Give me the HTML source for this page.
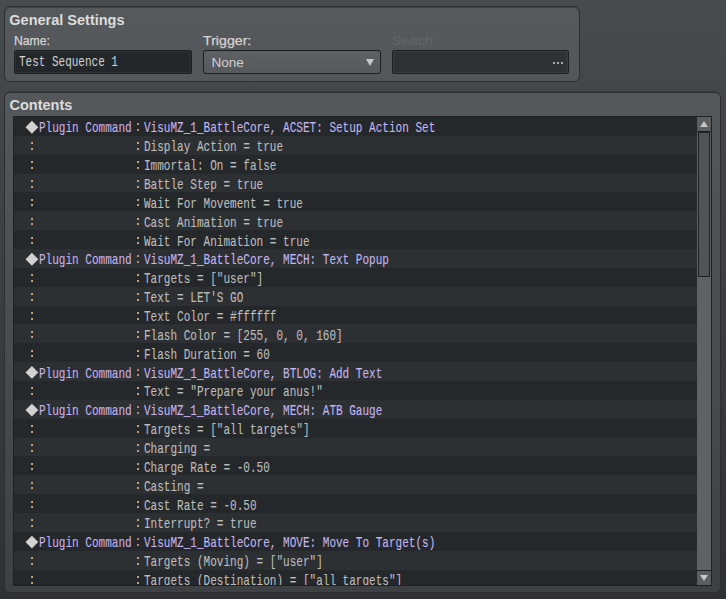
<!DOCTYPE html>
<html><head><meta charset="utf-8"><style>
*{margin:0;padding:0;box-sizing:border-box}
html,body{width:726px;height:599px;overflow:hidden}
body{background:linear-gradient(#484b4e,#2e3134);font-family:"Liberation Sans",sans-serif;position:relative}
.panel{position:absolute;border:1px solid #2c2e30;border-radius:6px}
.gs{left:4px;top:6px;width:576px;height:76px;background:linear-gradient(#56595c 0px,#54575a 76px);box-shadow:inset 0 1px 0 #3e4043}
.ct{left:4px;top:92px;width:717px;height:501px;background:linear-gradient(#55585b,#3e4144);box-shadow:0 -1px 0 #3a3c3e}
.h1{position:absolute;font-weight:bold;font-size:14.5px;color:#dcdcdc;white-space:nowrap;line-height:17px}
.lbl{position:absolute;font-size:13.5px;color:#d4d4d4;white-space:nowrap;line-height:16px;-webkit-text-stroke:.25px #d4d4d4}
.lbl.dis{-webkit-text-stroke:.2px #636669}
.lbl.dis{color:#636669}
.inp{position:absolute;top:43px;height:24px;border:1px solid #1c1e20;border-radius:2px}
.name{left:9px;width:178px;background:#24272a;box-shadow:inset 0 0 0 1px #2e3134}
.name span{position:absolute;left:4px;top:3px;font-family:"Liberation Mono",monospace;font-size:14px;color:#d0d0d0;transform:scaleX(.785);transform-origin:0 0;white-space:nowrap;line-height:16px}
.sw{left:387px;width:177px;background:#2f3235;box-shadow:inset 0 0 0 1px #3a3d40}
.dot{position:absolute;top:10.5px;width:2px;height:2px;background:#a8a8a8}
.combo{position:absolute;left:198px;top:43px;width:178px;height:24px;border:1px solid #1c1e20;border-radius:3px;background:linear-gradient(#5d6164,#565a5d)}
.combo span{position:absolute;left:7.5px;top:3.5px;font-size:13.5px;color:#d0d0d0;line-height:16px}
.tri{position:absolute;left:162px;top:8px;width:0;height:0;border-left:4px solid transparent;border-right:4px solid transparent;border-top:7px solid #c8c8c8}
.list{position:absolute;left:13px;top:116px;width:699px;height:470px;background:#25282a;border:1px solid #1e2022;overflow:hidden}
.rows{position:absolute;left:0;top:0;width:683px;height:468px;overflow:hidden}
.row{position:absolute;left:0;width:683px;height:18.857px}
.row.d{background:#25282a}
.row.l{background:#2d3033}
.t,.col{position:absolute;top:0;font-family:"Liberation Mono",monospace;font-size:14.6px;line-height:16px;white-space:nowrap;transform:scaleX(.756);transform-origin:0 50%;-webkit-text-stroke:.1px currentColor}
.pcn{left:25.3px;color:#c8b0e8}
.pct{left:129.7px;color:#c4b6ee}

.tx.cx{left:130.1px;color:#bdbdbd}
.col{width:8px}
.c1{left:15px;color:#c8c4b8}
.c2{left:121.2px;color:#c8c4b8}
.pcc{left:121.2px;color:#c8b0e8}
.dia{position:absolute;left:13.6px;top:5px;width:8.9px;height:8.9px;background:#d4d4d4;transform:rotate(45deg)}
.sb{position:absolute;left:683px;top:0;width:14px;height:468px;background:#5e6265}
.btn{position:absolute;left:0;width:14px;height:14px;background:#5a5e61}
.btn.up{top:0;border-bottom:1px solid #1e2022;height:15px}
.btn.dn{top:453px;border-top:1px solid #1e2022;height:15px}
.btn i{position:absolute;left:3px;width:0;height:0;border-left:4px solid transparent;border-right:4px solid transparent}
.up i{top:4px;border-bottom:6.5px solid #c6c6c6}
.dn i{top:4px;border-top:6.5px solid #c6c6c6}
.thumb{position:absolute;left:1px;top:15px;width:12px;height:145px;border:1px solid #1e2022;background:#505457}


.dt{position:absolute;width:2px;height:2px}
.cd{background:linear-gradient(90deg,#80a6cc 50%,#c8aa82 50%)}
.pd{background:linear-gradient(90deg,#8288d4 50%,#c88a80 50%)}
.dsvg{position:absolute;left:0;top:0}

</style></head><body>
<div class="panel gs">
  <div class="h1" style="left:4.3px;top:5px">General Settings</div>
  <div class="lbl" style="left:9px;top:26px;transform:scaleX(.905);transform-origin:0 0">Name:</div>
  <div class="lbl tr" style="left:198px;top:26px;transform:scaleX(1.05);transform-origin:0 0">Trigger:</div>
  <div class="lbl dis" style="left:386.5px;top:26px;transform:scaleX(1.02);transform-origin:0 0">Switch:</div>
  <div class="inp name"><span>Test Sequence 1</span></div>
  <div class="combo"><span>None</span><i class="tri"></i></div>
  <div class="inp sw"><b class="dot" style="left:160px"></b><b class="dot" style="left:164px"></b><b class="dot" style="left:168px"></b></div>
</div>
<div class="panel ct">
  <div class="h1" style="left:4.5px;top:4px">Contents</div>
</div>
<div class="list">
<div class="rows">
<div class="row d" style="top:0.000px"></div>
<div class="row l" style="top:18.857px"></div>
<div class="row d" style="top:37.714px"></div>
<div class="row l" style="top:56.571px"></div>
<div class="row d" style="top:75.428px"></div>
<div class="row l" style="top:94.285px"></div>
<div class="row d" style="top:113.142px"></div>
<div class="row l" style="top:131.999px"></div>
<div class="row d" style="top:150.856px"></div>
<div class="row l" style="top:169.713px"></div>
<div class="row d" style="top:188.570px"></div>
<div class="row l" style="top:207.427px"></div>
<div class="row d" style="top:226.284px"></div>
<div class="row l" style="top:245.141px"></div>
<div class="row d" style="top:263.998px"></div>
<div class="row l" style="top:282.855px"></div>
<div class="row d" style="top:301.712px"></div>
<div class="row l" style="top:320.569px"></div>
<div class="row d" style="top:339.426px"></div>
<div class="row l" style="top:358.283px"></div>
<div class="row d" style="top:377.140px"></div>
<div class="row l" style="top:395.997px"></div>
<div class="row d" style="top:414.854px"></div>
<div class="row l" style="top:433.711px"></div>
<div class="row d" style="top:452.568px"></div>
<b class="dt pd" style="left:123px;top:6px"></b><b class="dt pd" style="left:123px;top:12px"></b>
<span class="t pcn" style="top:3px">Plugin Command</span><span class="t tx pct" style="top:3px">VisuMZ_1_BattleCore, ACSET: Setup Action Set</span>
<b class="dt cd" style="left:17px;top:25px"></b><b class="dt cd" style="left:17px;top:31px"></b><b class="dt cd" style="left:123px;top:25px"></b><b class="dt cd" style="left:123px;top:31px"></b>
<span class="t tx cx" style="top:22px">Display Action = true</span>
<b class="dt cd" style="left:17px;top:44px"></b><b class="dt cd" style="left:17px;top:50px"></b><b class="dt cd" style="left:123px;top:44px"></b><b class="dt cd" style="left:123px;top:50px"></b>
<span class="t tx cx" style="top:41px">Immortal: On = false</span>
<b class="dt cd" style="left:17px;top:63px"></b><b class="dt cd" style="left:17px;top:69px"></b><b class="dt cd" style="left:123px;top:63px"></b><b class="dt cd" style="left:123px;top:69px"></b>
<span class="t tx cx" style="top:60px">Battle Step = true</span>
<b class="dt cd" style="left:17px;top:82px"></b><b class="dt cd" style="left:17px;top:87px"></b><b class="dt cd" style="left:123px;top:82px"></b><b class="dt cd" style="left:123px;top:87px"></b>
<span class="t tx cx" style="top:79px">Wait For Movement = true</span>
<b class="dt cd" style="left:17px;top:101px"></b><b class="dt cd" style="left:17px;top:106px"></b><b class="dt cd" style="left:123px;top:101px"></b><b class="dt cd" style="left:123px;top:106px"></b>
<span class="t tx cx" style="top:98px">Cast Animation = true</span>
<b class="dt cd" style="left:17px;top:120px"></b><b class="dt cd" style="left:17px;top:125px"></b><b class="dt cd" style="left:123px;top:120px"></b><b class="dt cd" style="left:123px;top:125px"></b>
<span class="t tx cx" style="top:117px">Wait For Animation = true</span>
<b class="dt pd" style="left:123px;top:138px"></b><b class="dt pd" style="left:123px;top:144px"></b>
<span class="t pcn" style="top:135px">Plugin Command</span><span class="t tx pct" style="top:135px">VisuMZ_1_BattleCore, MECH: Text Popup</span>
<b class="dt cd" style="left:17px;top:157px"></b><b class="dt cd" style="left:17px;top:163px"></b><b class="dt cd" style="left:123px;top:157px"></b><b class="dt cd" style="left:123px;top:163px"></b>
<span class="t tx cx" style="top:154px">Targets = [&quot;user&quot;]</span>
<b class="dt cd" style="left:17px;top:176px"></b><b class="dt cd" style="left:17px;top:182px"></b><b class="dt cd" style="left:123px;top:176px"></b><b class="dt cd" style="left:123px;top:182px"></b>
<span class="t tx cx" style="top:173px">Text = LET&#x27;S GO</span>
<b class="dt cd" style="left:17px;top:195px"></b><b class="dt cd" style="left:17px;top:201px"></b><b class="dt cd" style="left:123px;top:195px"></b><b class="dt cd" style="left:123px;top:201px"></b>
<span class="t tx cx" style="top:192px">Text Color = #ffffff</span>
<b class="dt cd" style="left:17px;top:214px"></b><b class="dt cd" style="left:17px;top:219px"></b><b class="dt cd" style="left:123px;top:214px"></b><b class="dt cd" style="left:123px;top:219px"></b>
<span class="t tx cx" style="top:211px">Flash Color = [255, 0, 0, 160]</span>
<b class="dt cd" style="left:17px;top:233px"></b><b class="dt cd" style="left:17px;top:238px"></b><b class="dt cd" style="left:123px;top:233px"></b><b class="dt cd" style="left:123px;top:238px"></b>
<span class="t tx cx" style="top:230px">Flash Duration = 60</span>
<b class="dt pd" style="left:123px;top:252px"></b><b class="dt pd" style="left:123px;top:257px"></b>
<span class="t pcn" style="top:249px">Plugin Command</span><span class="t tx pct" style="top:249px">VisuMZ_1_BattleCore, BTLOG: Add Text</span>
<b class="dt cd" style="left:17px;top:270px"></b><b class="dt cd" style="left:17px;top:276px"></b><b class="dt cd" style="left:123px;top:270px"></b><b class="dt cd" style="left:123px;top:276px"></b>
<span class="t tx cx" style="top:267px">Text = &quot;Prepare your anus!&quot;</span>
<b class="dt pd" style="left:123px;top:289px"></b><b class="dt pd" style="left:123px;top:295px"></b>
<span class="t pcn" style="top:286px">Plugin Command</span><span class="t tx pct" style="top:286px">VisuMZ_1_BattleCore, MECH: ATB Gauge</span>
<b class="dt cd" style="left:17px;top:308px"></b><b class="dt cd" style="left:17px;top:314px"></b><b class="dt cd" style="left:123px;top:308px"></b><b class="dt cd" style="left:123px;top:314px"></b>
<span class="t tx cx" style="top:305px">Targets = [&quot;all targets&quot;]</span>
<b class="dt cd" style="left:17px;top:327px"></b><b class="dt cd" style="left:17px;top:333px"></b><b class="dt cd" style="left:123px;top:327px"></b><b class="dt cd" style="left:123px;top:333px"></b>
<span class="t tx cx" style="top:324px">Charging =</span>
<b class="dt cd" style="left:17px;top:346px"></b><b class="dt cd" style="left:17px;top:351px"></b><b class="dt cd" style="left:123px;top:346px"></b><b class="dt cd" style="left:123px;top:351px"></b>
<span class="t tx cx" style="top:343px">Charge Rate = -0.50</span>
<b class="dt cd" style="left:17px;top:365px"></b><b class="dt cd" style="left:17px;top:370px"></b><b class="dt cd" style="left:123px;top:365px"></b><b class="dt cd" style="left:123px;top:370px"></b>
<span class="t tx cx" style="top:362px">Casting =</span>
<b class="dt cd" style="left:17px;top:384px"></b><b class="dt cd" style="left:17px;top:389px"></b><b class="dt cd" style="left:123px;top:384px"></b><b class="dt cd" style="left:123px;top:389px"></b>
<span class="t tx cx" style="top:381px">Cast Rate = -0.50</span>
<b class="dt cd" style="left:17px;top:402px"></b><b class="dt cd" style="left:17px;top:408px"></b><b class="dt cd" style="left:123px;top:402px"></b><b class="dt cd" style="left:123px;top:408px"></b>
<span class="t tx cx" style="top:399px">Interrupt? = true</span>
<b class="dt pd" style="left:123px;top:421px"></b><b class="dt pd" style="left:123px;top:427px"></b>
<span class="t pcn" style="top:418px">Plugin Command</span><span class="t tx pct" style="top:418px">VisuMZ_1_BattleCore, MOVE: Move To Target(s)</span>
<b class="dt cd" style="left:17px;top:440px"></b><b class="dt cd" style="left:17px;top:446px"></b><b class="dt cd" style="left:123px;top:440px"></b><b class="dt cd" style="left:123px;top:446px"></b>
<span class="t tx cx" style="top:437px">Targets (Moving) = [&quot;user&quot;]</span>
<b class="dt cd" style="left:17px;top:459px"></b><b class="dt cd" style="left:17px;top:465px"></b><b class="dt cd" style="left:123px;top:459px"></b><b class="dt cd" style="left:123px;top:465px"></b>
<span class="t tx cx" style="top:456px">Targets (Destination) = [&quot;all targets&quot;]</span>
<svg class="dsvg" width="683" height="468" fill="#d2d2d2"><polygon points="11.50,10.25 17.90,3.85 24.30,10.25 17.90,16.65"/><polygon points="11.50,142.25 17.90,135.85 24.30,142.25 17.90,148.65"/><polygon points="11.50,255.39 17.90,248.99 24.30,255.39 17.90,261.79"/><polygon points="11.50,293.11 17.90,286.71 24.30,293.11 17.90,299.50"/><polygon points="11.50,425.10 17.90,418.70 24.30,425.10 17.90,431.50"/></svg>
</div>
<div class="sb">
  <div class="btn up"><i></i></div>
  <div class="thumb"></div>
  <div class="btn dn"><i></i></div>
</div>
</div>
</body></html>
